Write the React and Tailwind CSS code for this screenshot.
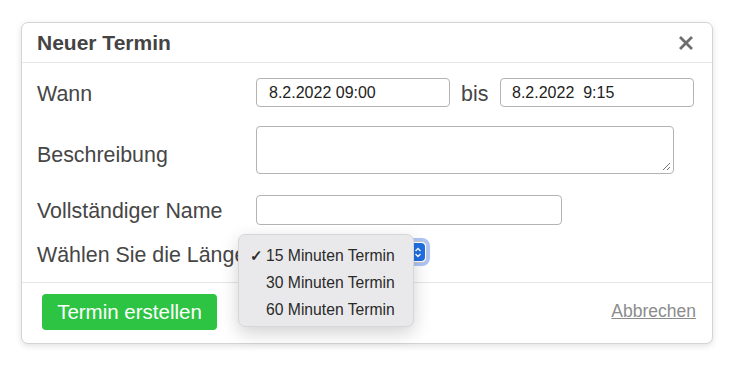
import React from "react";

export default function App() {
  const font = { fontFamily: '"Liberation Sans", Arial, sans-serif' };
  return (
    <div className="w-[736px] h-[372px] bg-white pt-[22px] pl-[21px]" style={font}>
      <div className="w-[692px] h-[322px] bg-white border border-[#d4d4d4] rounded-[7px] shadow-[0_2px_6px_rgba(0,0,0,0.12)] flex flex-col">
        {/* header */}
        <div className="h-[40px] flex items-center justify-between pl-[15px] pr-[18px] border-b border-[#e6e6e6] shrink-0">
          <div className="text-[21px] font-bold text-[#444]">Neuer Termin</div>
          <svg width="16" height="16" viewBox="0 0 16 16" className="mt-[1px]">
            <path d="M2 2 L14 14 M14 2 L2 14" stroke="#6e6e6e" strokeWidth="2.8" strokeLinecap="butt" />
          </svg>
        </div>
        {/* body */}
        <div className="flex-1 pt-[15px] pl-[15px] pr-[18px] flex flex-col text-[#464646] text-[21.4px]">
          <div className="flex items-center h-[29px]">
            <div className="w-[219px] pt-[4px]">Wann</div>
            <div className="w-[194px] h-[29px] border border-[#b3b3b3] rounded-[4px] pl-[12px] flex items-center text-[16px] text-[#222] whitespace-pre">8.2.2022 09:00</div>
            <div className="ml-[11px] w-[39px] pt-[4px]">bis</div>
            <div className="w-[194px] h-[29px] border border-[#b3b3b3] rounded-[4px] pl-[11px] flex items-center text-[16px] text-[#222] whitespace-pre">8.2.2022  9:15</div>
          </div>
          <div className="flex items-start h-[48px] mt-[19px]">
            <div className="w-[219px] pt-[17px] leading-[24px]">Beschreibung</div>
            <div className="w-[418px] h-[48px] border border-[#b3b3b3] rounded-[4px] relative">
              <svg width="9" height="9" viewBox="0 0 9 9" className="absolute right-[2px] bottom-[2px]">
                <path d="M8 1 L1 8 M8 5 L5 8" stroke="#777" strokeWidth="1" />
              </svg>
            </div>
          </div>
          <div className="flex items-center h-[30px] mt-[21px]">
            <div className="w-[219px] pt-[2px]">Vollständiger Name</div>
            <div className="w-[306px] h-[30px] border border-[#b3b3b3] rounded-[4px]"></div>
          </div>
          <div className="flex items-center h-[30px] mt-[15px]">
            <div className="w-[219px] whitespace-nowrap">Wählen Sie die Länge</div>
            <div className="relative self-start mt-[1px]">
              <div className="w-[171px] h-[22px] rounded-[5px] bg-white border border-[#c9c9c9] shadow-[0_0_0_3px_rgba(110,150,240,0.55)] flex justify-end">
                <div className="w-[15px] h-[18px] mt-[1px] mr-[1px] rounded-[4px] bg-[#1f6fe5] flex items-center justify-center">
                  <svg width="8" height="11" viewBox="0 0 8 11">
                    <path d="M1.5 4 L4 1.5 L6.5 4 M1.5 7 L4 9.5 L6.5 7" stroke="white" strokeWidth="1.4" fill="none" />
                  </svg>
                </div>
              </div>
              {/* open popup menu */}
              <div className="absolute left-[-18px] top-[-7px] w-[176px] h-[93px] rounded-[7px] bg-[#e9e9eb] border border-[#d6d6d8] shadow-[0_6px_18px_rgba(0,0,0,0.18)] pt-[7px] text-[15.7px] text-[#2a2a2a] z-10">
                <div className="h-[27px] flex items-center relative pl-[27px]">
                  <span className="absolute left-[11px] text-[15px] font-bold top-[3px]">✓</span>
                  15 Minuten Termin
                </div>
                <div className="h-[27px] flex items-center pl-[27px]">30 Minuten Termin</div>
                <div className="h-[27px] flex items-center pl-[27px]">60 Minuten Termin</div>
              </div>
            </div>
          </div>
        </div>
        {/* footer */}
        <div className="h-[61px] border-t border-[#e6e6e6] flex items-start justify-between pl-[20px] pr-[16px] pt-[11px] shrink-0">
          <div className="w-[175px] h-[36px] rounded-[4px] bg-[#2ec443] text-white text-[20.5px] flex items-center justify-center">Termin erstellen</div>
          <div className="text-[17.5px] text-[#8c8c8c] underline mt-[4px]">Abbrechen</div>
        </div>
      </div>
    </div>
  );
}
